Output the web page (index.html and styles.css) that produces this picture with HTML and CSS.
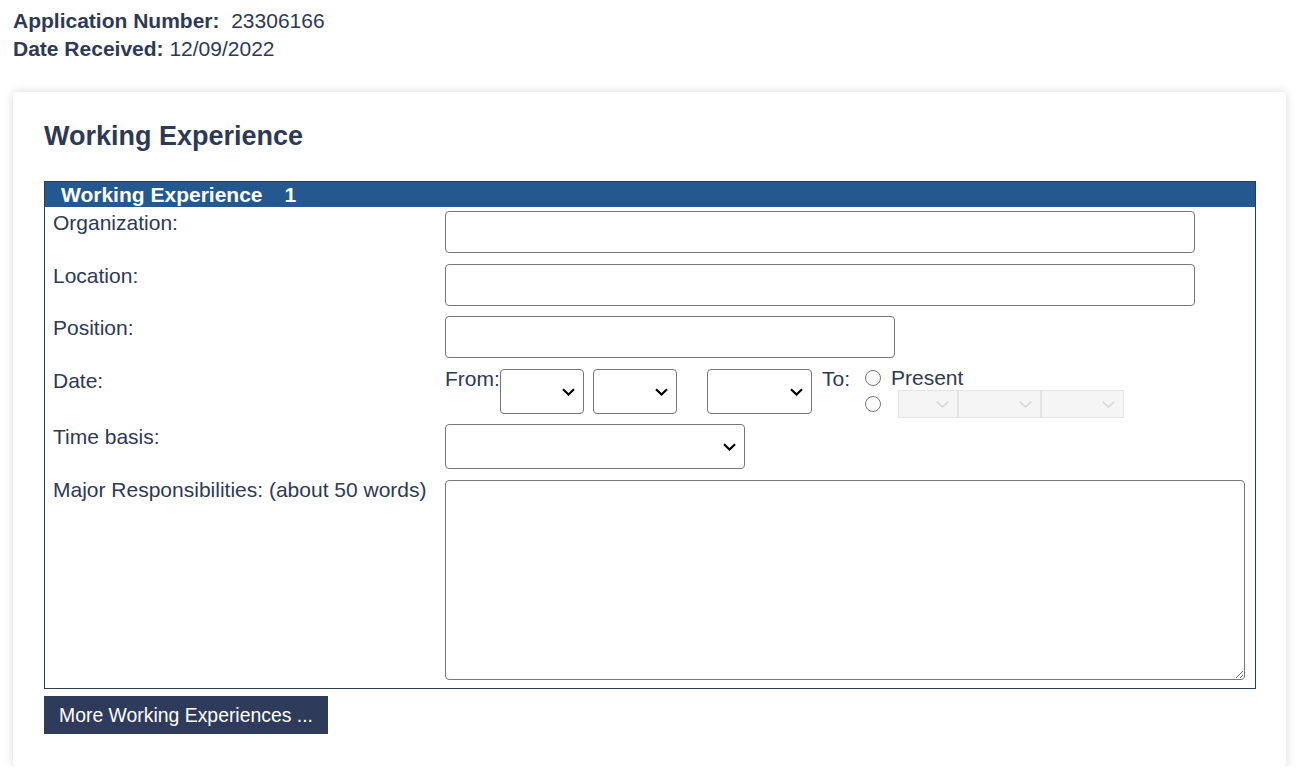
FILE: index.html
```html
<!DOCTYPE html>
<html>
<head>
<meta charset="utf-8">
<link rel="stylesheet" href="styles.css">
</head>
<body>
<div class="meta">
  <div><span class="meta-key">Application Number:</span>&nbsp; 23306166</div>
  <div><span class="meta-key">Date Received:</span> 12/09/2022</div>
</div>
<div class="card">
  <h2 class="title">Working Experience</h2>
  <div class="exp">
    <div class="exp-head">Working Experience<span class="exp-num">1</span></div>
    <div class="rows">
      <div class="row r-org">
        <div class="label">Organization:</div>
        <div class="field"><input class="inp inp-long" type="text"></div>
      </div>
      <div class="row r-loc">
        <div class="label">Location:</div>
        <div class="field"><input class="inp inp-long" type="text"></div>
      </div>
      <div class="row r-pos">
        <div class="label">Position:</div>
        <div class="field"><input class="inp inp-mid" type="text"></div>
      </div>
      <div class="row r-date">
        <div class="label">Date:</div>
        <div class="field date-field">
          <span class="from">From:</span>
          <select class="sel sel-d"><option></option></select>
          <select class="sel sel-m"><option></option></select>
          <select class="sel sel-y"><option></option></select>
          <span class="to">To:</span>
          <div class="to-group">
            <label class="to-row to-present"><input type="radio" name="to" class="radio"><span>Present</span></label>
            <div class="to-row to-date">
              <input type="radio" name="to" class="radio">
              <div class="dis-group">
                <select class="dsel dsel-a" disabled><option></option></select>
                <select class="dsel dsel-b" disabled><option></option></select>
                <select class="dsel dsel-b" disabled><option></option></select>
              </div>
            </div>
          </div>
        </div>
      </div>
      <div class="row r-time">
        <div class="label">Time basis:</div>
        <div class="field"><select class="sel sel-time"><option></option></select></div>
      </div>
      <div class="row r-resp">
        <div class="label">Major Responsibilities: (about 50 words)</div>
        <div class="field"><textarea class="ta"></textarea></div>
      </div>
    </div>
  </div>
  <button class="more" type="button">More Working Experiences ...</button>
</div>
</body>
</html>
```
FILE: styles.css
```css
html, body {
  margin: 0;
  padding: 0;
  background: #ffffff;
}
body {
  font-family: "Liberation Sans", Arial, sans-serif;
  color: #2d3956;
  font-size: 21px;
}
.meta {
  padding: 7px 0 0 13px;
  line-height: 28px;
}
.meta-key {
  font-weight: bold;
}
.card {
  margin: 29px 20px 0 13px;
  padding: 30px 30px 32px 31px;
  background: #fff;
  border-radius: 4px;
  box-shadow: 0 0 10px rgba(0, 0, 0, 0.16);
}
.title {
  margin: 0;
  font-size: 27px;
  line-height: 29px;
  font-weight: bold;
  color: #2d3956;
}
.exp {
  margin-top: 30px;
  border: 1px solid #2e3a59;
}
.exp-head {
  background: #245890;
  color: #fff;
  font-weight: bold;
  height: 25px;
  line-height: 25px;
  padding-left: 16px;
  white-space: pre;
}
.exp-num {
  margin-left: 22px;
}
.rows {
  display: flex;
  flex-direction: column;
  padding: 4px 10px 8px 0;
}
.row {
  display: grid;
  grid-template-columns: 400px 1fr;
}
.r-loc { margin-top: 11px; }
.r-pos { margin-top: 10px; }
.r-date { margin-top: 11px; }
.r-time { margin-top: 6px; }
.r-resp { margin-top: 11px; }
.label {
  padding-left: 8px;
  line-height: 23px;
}
.r-time .label { padding-top: 1px; }
.r-resp .label { line-height: 20px; }
.field {
  display: flex;
}
.inp {
  box-sizing: border-box;
  height: 42px;
  border: 1px solid #767676;
  border-radius: 4px;
  background: #fff;
  font: inherit;
  padding: 0 6px;
  margin: 0;
}
.inp-long { width: 750px; }
.inp-mid { width: 450px; }
.sel {
  box-sizing: border-box;
  height: 45px;
  border: 1px solid #767676;
  border-radius: 4px;
  -webkit-appearance: none;
  appearance: none;
  background: #fff url("data:image/svg+xml;utf8,<svg xmlns='http://www.w3.org/2000/svg' width='13' height='8' viewBox='0 0 13 8'><path d='M1 1.2 L6.5 6.5 L12 1.2' fill='none' stroke='black' stroke-width='2.2'/></svg>") no-repeat right 8px center;
  font: inherit;
  color: #000;
  margin: 0;
}
.sel-d { width: 84px; }
.sel-m { width: 84px; margin-left: 9px; }
.sel-y { width: 105px; margin-left: 30px; }
.sel-time { width: 300px; }
.date-field {
  align-items: flex-start;
}
.from {
  width: 55px;
  line-height: 20px;
}
.to {
  margin-left: 10px;
  width: 43px;
  line-height: 20px;
}
.to-group {
  display: flex;
  flex-direction: column;
}
.to-row {
  display: flex;
  align-items: center;
}
.to-present {
  height: 18px;
  line-height: 18px;
}
.to-present span { margin-left: 10px; }
.radio {
  width: 16px;
  height: 16px;
  margin: 0;
  accent-color: #767676;
}
.to-date {
  margin-top: 3px;
}
.to-date .radio { margin-right: 17px; }
.dis-group {
  display: flex;
}
.dsel {
  box-sizing: border-box;
  height: 28px;
  border: 1px solid #d9d9d9;
  border-radius: 0;
  -webkit-appearance: none;
  appearance: none;
  background: #f1f1f1 url("data:image/svg+xml;utf8,<svg xmlns='http://www.w3.org/2000/svg' width='13' height='7' viewBox='0 0 13 7'><path d='M0.7 0.7 L6.5 6 L12.3 0.7' fill='none' stroke='%23c4c4c4' stroke-width='1.3'/></svg>") no-repeat right 8px center;
  margin: 0;
  font-size: 14px;
}
.dsel-a { width: 60px; }
.dsel-b { width: 83px; }
.ta {
  box-sizing: border-box;
  width: 800px;
  height: 200px;
  border: 1px solid #767676;
  border-radius: 4px;
  margin: 0;
  font: inherit;
}
.more {
  margin-top: 7px;
  height: 38px;
  padding: 0 15px;
  border: 0;
  border-radius: 0;
  background: #2f3b5a;
  color: #fff;
  font-family: "Liberation Sans", Arial, sans-serif;
  font-size: 19.4px;
}
```
